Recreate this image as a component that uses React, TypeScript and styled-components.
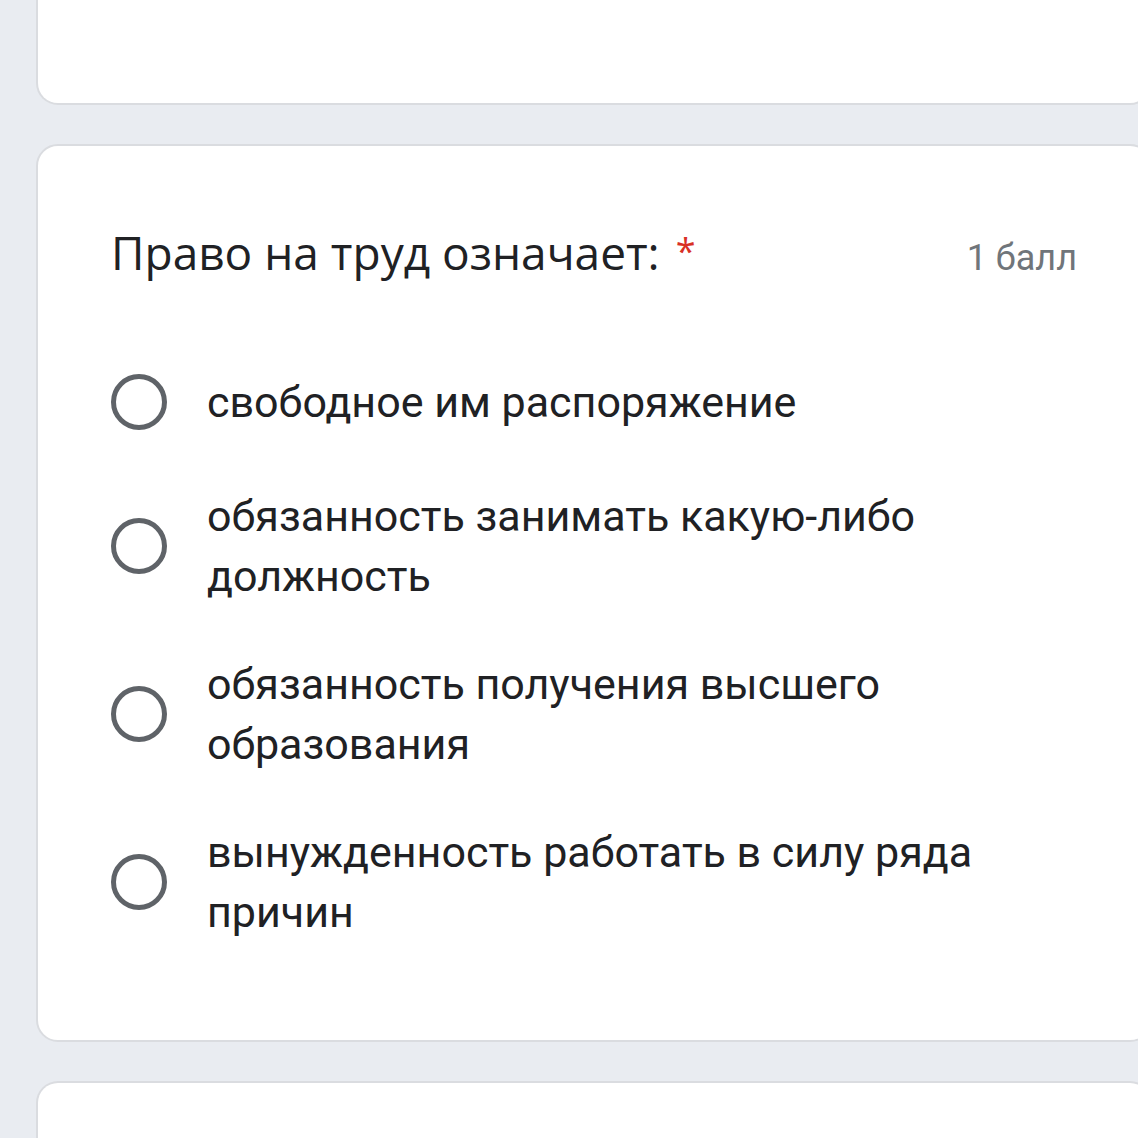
import React from "react";
import styled, { createGlobalStyle } from "styled-components";

const Global = createGlobalStyle`
  html, body { margin: 0; padding: 0; background: #e9ecf1; overflow: hidden; }
  body { width: 1138px; height: 1138px; }
`;

const Page = styled.div`
  display: flex;
  flex-direction: column;
  gap: 39px;
  padding-left: 36px;
  width: 1138px;
  height: 1138px;
  box-sizing: border-box;
  overflow: hidden;
`;

const Card = styled.div<{ $cut?: "top" | "bottom" }>`
  flex: none;
  width: 1116px;
  box-sizing: border-box;
  background: #fff;
  border: 2px solid #dadce0;
  border-radius: 22px;
  ${(p) => (p.$cut === "top" ? "border-top: none; border-top-left-radius: 0; border-top-right-radius: 0;" : "")}
  ${(p) => (p.$cut === "bottom" ? "border-bottom: none; border-bottom-left-radius: 0; border-bottom-right-radius: 0;" : "")}
`;

const StubCard = styled(Card)<{ $h: number }>`
  height: ${(p) => p.$h}px;
`;

const QuestionCard = styled(Card)`
  height: 898px;
  padding: 73px 73px 0 73px;
`;

const Header = styled.div`
  display: flex;
  justify-content: space-between;
  align-items: baseline;
`;

const Title = styled.div`
  font-family: "Open Sans", "Noto Sans", sans-serif;
  font-size: 46px;
  line-height: 64px;
  color: #202124;
`;

const Required = styled.span`
  color: #d93025;
  font-size: 36px;
  margin-left: 16px;
  vertical-align: 6px;
`;

const Points = styled.div`
  font-family: Roboto, "Noto Sans", sans-serif;
  font-size: 36px;
  color: #70757a;
`;

const Options = styled.div`
  display: flex;
  flex-direction: column;
  gap: 48px;
  margin-top: 82px;
`;

const Option = styled.label`
  display: flex;
  align-items: center;
  gap: 40px;
  min-height: 72px;
`;

const Radio = styled.span`
  flex: none;
  width: 56px;
  height: 56px;
  box-sizing: border-box;
  border: 5px solid #5f6368;
  border-radius: 50%;
`;

const OptionText = styled.span`
  flex: 1;
  font-family: Roboto, "Noto Sans", sans-serif;
  font-size: 43px;
  line-height: 60px;
  color: #202124;
`;

const options = [
  "свободное им распоряжение",
  "обязанность занимать какую-либо должность",
  "обязанность получения высшего образования",
  "вынужденность работать в силу ряда причин",
];

export default function App() {
  return (
    <>
      <Global />
      <Page>
        <StubCard $cut="top" $h={105} />
        <QuestionCard>
          <Header>
            <Title>
              Право на труд означает:<Required>*</Required>
            </Title>
            <Points>1 балл</Points>
          </Header>
          <Options>
            {options.map((o) => (
              <Option key={o}>
                <Radio />
                <OptionText>{o}</OptionText>
              </Option>
            ))}
          </Options>
        </QuestionCard>
        <StubCard $cut="bottom" $h={100} />
      </Page>
    </>
  );
}
